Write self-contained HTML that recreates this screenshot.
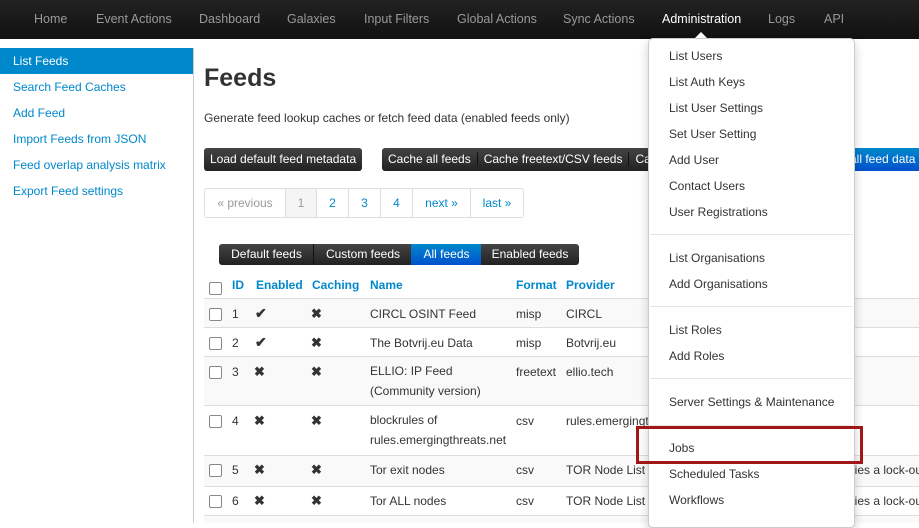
<!DOCTYPE html>
<html><head><meta charset="utf-8"><style>
*{box-sizing:border-box;margin:0;padding:0}
body{width:919px;height:523px;overflow:hidden;position:relative;font-family:"Liberation Sans",sans-serif;font-size:12px;color:#333;background:#fff}
.a{position:absolute;white-space:nowrap}
.nav{left:0;top:0;width:919px;height:39px;background:linear-gradient(#222,#111)}
.nav span{position:absolute;top:12px;font-size:12.5px;color:#999}
.side{left:0;top:48px;width:194px;height:475px;border-right:1px solid #ccc}
.side div{height:26px;line-height:26px;padding-left:13px;color:#0088cc;font-size:12px}
.btn{height:23px;line-height:23px;background:linear-gradient(#444,#222);color:#fff;font-size:12px;padding:0 6px;border-radius:3px}
.pg{top:188px;height:30px;border:1px solid #ddd;line-height:28px;text-align:center;color:#0088cc;font-size:12px}
.fb{top:244px;height:21px;line-height:21px;color:#fff;text-align:center;font-size:12px;background:linear-gradient(#444,#222)}
.row{left:204px;width:715px;border-top:1px solid #ddd}
.cb{width:13px;height:13px;border:1px solid #888;border-radius:2px;background:#fff}
.dd{left:648px;top:38px;width:207px;height:490px;background:#fff;border:1px solid #ccc;border-radius:5px;box-shadow:0 4px 10px rgba(0,0,0,.2)}
.dd span{position:absolute;left:20px;font-size:12px;color:#333}
.dv{position:absolute;left:1px;width:203px;height:1px;background:#e5e5e5}
</style></head><body>
<div class="a nav">
<span style="left:34px">Home</span><span style="left:96px">Event Actions</span><span style="left:199px">Dashboard</span><span style="left:287px">Galaxies</span><span style="left:364px">Input Filters</span><span style="left:457px">Global Actions</span><span style="left:563px">Sync Actions</span><span style="left:662px;color:#fff">Administration</span><span style="left:768px">Logs</span><span style="left:824px">API</span>
</div>
<div class="a side">
<div style="background:#0088cc;color:#fff">List Feeds</div><div>Search Feed Caches</div><div>Add Feed</div><div>Import Feeds from JSON</div><div>Feed overlap analysis matrix</div><div>Export Feed settings</div>
</div>
<div class="a" style="left:204px;top:64px;font-size:25px;font-weight:bold;color:#333">Feeds</div>
<div class="a" style="left:204px;top:111px;font-size:12px">Generate feed lookup caches or fetch feed data (enabled feeds only)</div>
<div class="a btn" style="left:204px;top:148px">Load default feed metadata</div>
<div class="a btn" style="left:382px;top:148px;width:280px;border-radius:3px 0 0 3px">Cache all feeds<span style="border-left:1px solid #111;margin-left:6px;padding-left:6px">Cache freetext/CSV feeds</span><span style="border-left:1px solid #111;margin-left:6px;padding-left:6px">Ca</span></div>
<div class="a btn" style="left:848px;top:148px;width:71px;background:linear-gradient(#08c,#0050cc);border-radius:0;padding:0 2px">all feed data</div>
<div class="a pg" style="left:204px;width:82px;color:#999;border-radius:3px 0 0 3px">« previous</div>
<div class="a pg" style="left:285px;width:32px;color:#999;background:#f5f5f5">1</div>
<div class="a pg" style="left:316px;width:33px">2</div>
<div class="a pg" style="left:348px;width:33px">3</div>
<div class="a pg" style="left:380px;width:33px">4</div>
<div class="a pg" style="left:412px;width:59px">next »</div>
<div class="a pg" style="left:470px;width:54px;border-radius:0 3px 3px 0">last »</div>
<div class="a fb" style="left:219px;width:95px;border-radius:3px 0 0 3px">Default feeds</div>
<div class="a fb" style="left:313px;width:99px;border-left:1px solid #111">Custom feeds</div>
<div class="a fb" style="left:411px;width:71px;background:linear-gradient(#08c,#0050cc)">All feeds</div>
<div class="a fb" style="left:481px;width:98px;border-radius:0 3px 3px 0">Enabled feeds</div>
<div class="a cb" style="left:209px;top:282px"></div>
<div class="a" style="left:232px;top:278px;font-weight:bold;color:#0088cc">ID</div>
<div class="a" style="left:256px;top:278px;font-weight:bold;color:#0088cc">Enabled</div>
<div class="a" style="left:312px;top:278px;font-weight:bold;color:#0088cc">Caching</div>
<div class="a" style="left:370px;top:278px;font-weight:bold;color:#0088cc">Name</div>
<div class="a" style="left:516px;top:278px;font-weight:bold;color:#0088cc">Format</div>
<div class="a" style="left:566px;top:278px;font-weight:bold;color:#0088cc">Provider</div>
<div class="a row" style="top:298px;height:29px;background:#f9f9f9"></div>
<div class="a row" style="top:327px;height:29px"></div>
<div class="a row" style="top:356px;height:49px;background:#f9f9f9"></div>
<div class="a row" style="top:405px;height:50px"></div>
<div class="a row" style="top:455px;height:31px;background:#f9f9f9"></div>
<div class="a row" style="top:486px;height:29px"></div>
<div class="a row" style="top:515px;height:8px;background:#f9f9f9"></div>
<div class="a cb" style="left:209px;top:308px"></div><div class="a" style="left:232px;top:307px">1</div><div class="a" style="left:255px;top:305px;font-size:14px;font-weight:bold">✔</div><div class="a" style="left:311px;top:306px;font-weight:bold;font-size:13px">✖</div><div class="a" style="left:370px;top:307px">CIRCL OSINT Feed</div><div class="a" style="left:516px;top:307px">misp</div><div class="a" style="left:566px;top:307px">CIRCL</div>
<div class="a cb" style="left:209px;top:337px"></div><div class="a" style="left:232px;top:336px">2</div><div class="a" style="left:255px;top:334px;font-size:14px;font-weight:bold">✔</div><div class="a" style="left:311px;top:335px;font-weight:bold;font-size:13px">✖</div><div class="a" style="left:370px;top:336px">The Botvrij.eu Data</div><div class="a" style="left:516px;top:336px">misp</div><div class="a" style="left:566px;top:336px">Botvrij.eu</div>
<div class="a cb" style="left:209px;top:366px"></div><div class="a" style="left:232px;top:365px">3</div><div class="a" style="left:254px;top:364px;font-weight:bold;font-size:13px">✖</div><div class="a" style="left:311px;top:364px;font-weight:bold;font-size:13px">✖</div><div class="a" style="left:370px;line-height:20px;top:361px">ELLIO: IP Feed<br>(Community version)</div><div class="a" style="left:516px;top:365px">freetext</div><div class="a" style="left:566px;top:365px">ellio.tech</div>
<div class="a cb" style="left:209px;top:415px"></div><div class="a" style="left:232px;top:414px">4</div><div class="a" style="left:254px;top:413px;font-weight:bold;font-size:13px">✖</div><div class="a" style="left:311px;top:413px;font-weight:bold;font-size:13px">✖</div><div class="a" style="left:370px;top:410px;line-height:20px">blockrules of<br>rules.emergingthreats.net</div><div class="a" style="left:516px;top:414px">csv</div><div class="a" style="left:566px;top:414px">rules.emergingt</div>
<div class="a cb" style="left:209px;top:464px"></div><div class="a" style="left:232px;top:463px">5</div><div class="a" style="left:254px;top:462px;font-weight:bold;font-size:13px">✖</div><div class="a" style="left:311px;top:462px;font-weight:bold;font-size:13px">✖</div><div class="a" style="left:370px;top:463px">Tor exit nodes</div><div class="a" style="left:516px;top:463px">csv</div><div class="a" style="left:566px;top:463px">TOR Node List</div><div class="a" style="left:852px;top:463px">lies a lock-ou</div>
<div class="a cb" style="left:209px;top:495px"></div><div class="a" style="left:232px;top:494px">6</div><div class="a" style="left:254px;top:493px;font-weight:bold;font-size:13px">✖</div><div class="a" style="left:311px;top:493px;font-weight:bold;font-size:13px">✖</div><div class="a" style="left:370px;top:494px">Tor ALL nodes</div><div class="a" style="left:516px;top:494px">csv</div><div class="a" style="left:566px;top:494px">TOR Node List</div><div class="a" style="left:852px;top:494px">lies a lock-ou</div>
<div class="a" style="left:694px;top:32px;width:0;height:0;border-left:7px solid transparent;border-right:7px solid transparent;border-bottom:7px solid #fff"></div>
<div class="a dd">
<span style="top:10px">List Users</span><span style="top:36px">List Auth Keys</span><span style="top:62px">List User Settings</span><span style="top:88px">Set User Setting</span><span style="top:114px">Add User</span><span style="top:140px">Contact Users</span><span style="top:166px">User Registrations</span>
<div class="dv" style="top:195px"></div>
<span style="top:212px">List Organisations</span><span style="top:238px">Add Organisations</span>
<div class="dv" style="top:267px"></div>
<span style="top:284px">List Roles</span><span style="top:310px">Add Roles</span>
<div class="dv" style="top:339px"></div>
<span style="top:356px">Server Settings &amp; Maintenance</span>
<div class="dv" style="top:386px"></div>
<span style="top:402px">Jobs</span><span style="top:428px">Scheduled Tasks</span><span style="top:454px">Workflows</span>
</div>
<div class="a" style="left:636px;top:426px;width:227px;height:38px;border:3px solid #a11616"></div>
</body></html>
